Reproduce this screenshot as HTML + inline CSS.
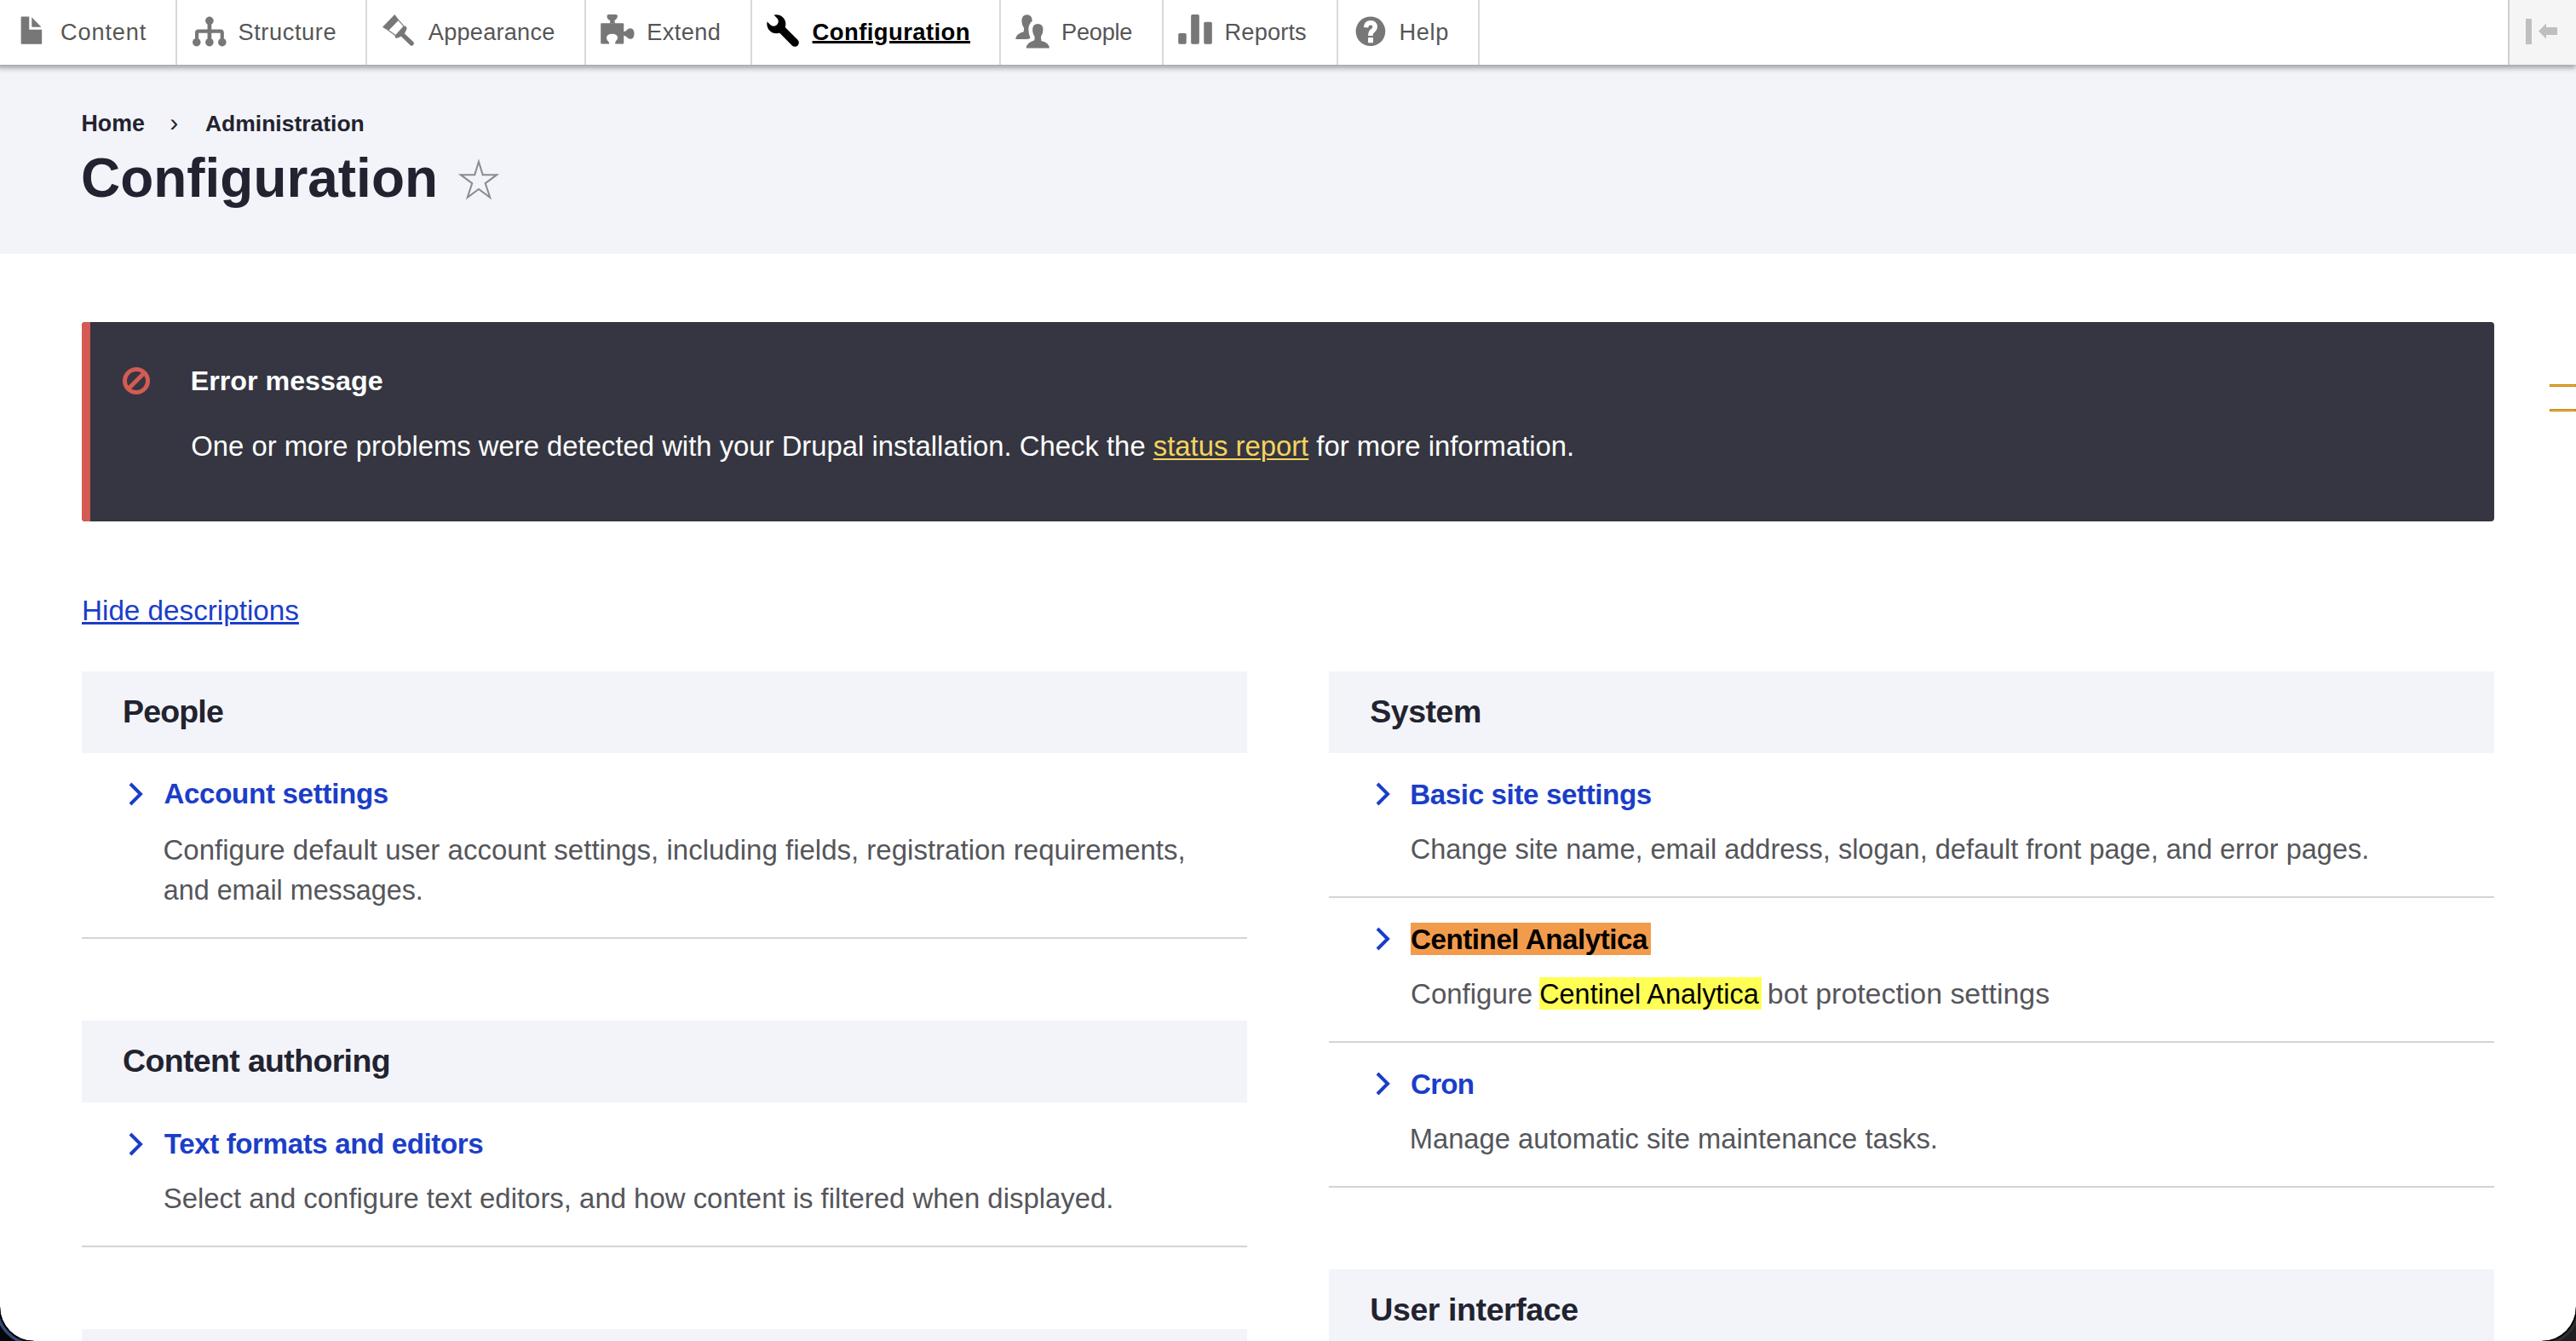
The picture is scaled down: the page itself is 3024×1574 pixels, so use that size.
<!DOCTYPE html>
<html><head><meta charset="utf-8">
<style>
html,body{margin:0;padding:0;}
body{width:3024px;height:1574px;overflow:hidden;position:relative;background:#fff;font-family:"Liberation Sans",sans-serif;}
.t{position:absolute;white-space:nowrap;line-height:1;}
.a{position:absolute;}
.r{position:absolute;}
</style></head><body>
<div class="r" style="left:0;top:0;width:3024px;height:298px;background:#f3f4f9"></div>
<!-- toolbar -->
<div class="r" style="left:0;top:0;width:3024px;height:76px;background:#fff;box-shadow:-2px 2px 6px 2px rgba(0,0,0,0.3333)"></div>
<div class="r" style="left:2946px;top:0;width:78px;height:76px;background:#f5f5f5"></div>
<div class="r" style="left:206px;top:0;width:2px;height:76px;background:#d9d9d9"></div>
<div class="r" style="left:429px;top:0;width:2px;height:76px;background:#d9d9d9"></div>
<div class="r" style="left:686px;top:0;width:2px;height:76px;background:#d9d9d9"></div>
<div class="r" style="left:881px;top:0;width:2px;height:76px;background:#d9d9d9"></div>
<div class="r" style="left:1173px;top:0;width:2px;height:76px;background:#d9d9d9"></div>
<div class="r" style="left:1364px;top:0;width:2px;height:76px;background:#d9d9d9"></div>
<div class="r" style="left:1569px;top:0;width:2px;height:76px;background:#d9d9d9"></div>
<div class="r" style="left:1735px;top:0;width:2px;height:76px;background:#d9d9d9"></div>
<div class="r" style="left:2944px;top:0;width:2px;height:76px;background:#d0d0d0"></div>
<!-- toggle icon -->
<div class="r" style="left:2965px;top:22px;width:7px;height:30px;background:#bfbfbf"></div>
<svg class="a" style="left:2979px;top:27px" width="24" height="20" viewBox="0 0 24 20"><path d="M1 9.5 L10 0.5 L10 5 L23 5 L23 14 L10 14 L10 18.5 Z" fill="#bfbfbf"/></svg>
<!-- star -->
<svg class="a" style="left:530px;top:180px" width="64" height="64" viewBox="0 0 1341 1341"><path d="M670 205 L768 527 L1115 527 L832 735 L948 1085 L670 880 L392 1085 L508 735 L225 527 L572 527 Z" fill="none" stroke="#878b96" stroke-width="42" stroke-linejoin="miter" stroke-miterlimit="10"/></svg>
<!-- error box -->
<div class="r" style="left:96px;top:378px;width:2832px;height:234px;background:#353641;border-radius:4px;overflow:hidden"><div style="position:absolute;left:0;top:0;width:10px;height:234px;background:#d45b53"></div></div>
<svg class="a" style="left:144px;top:431px" width="32" height="32" viewBox="0 0 32 32"><circle cx="16" cy="16" r="13.5" fill="none" stroke="#d45b53" stroke-width="5"/><path d="M7 25 L25 7" stroke="#d45b53" stroke-width="5"/></svg>
<!-- find tick marks -->
<div class="r" style="left:2993px;top:451px;width:31px;height:3px;background:#f0b429;border:1px solid #c4861b;box-sizing:border-box"></div>
<div class="r" style="left:2993px;top:480px;width:31px;height:3px;background:#f0b429;border:1px solid #c4861b;box-sizing:border-box"></div>
<!-- section bars -->
<div class="r" style="left:96px;top:788px;width:1368px;height:96px;background:#f3f4f9"></div>
<div class="r" style="left:1560px;top:788px;width:1368px;height:96px;background:#f3f4f9"></div>
<div class="r" style="left:96px;top:1198px;width:1368px;height:96px;background:#f3f4f9"></div>
<div class="r" style="left:96px;top:1560px;width:1368px;height:96px;background:#f3f4f9"></div>
<div class="r" style="left:1560px;top:1490px;width:1368px;height:96px;background:#f3f4f9"></div>
<!-- dividers -->
<div class="r" style="left:96px;top:1100px;width:1368px;height:2px;background:#d4d4d8"></div>
<div class="r" style="left:96px;top:1462px;width:1368px;height:2px;background:#d4d4d8"></div>
<div class="r" style="left:1560px;top:1052px;width:1368px;height:2px;background:#d4d4d8"></div>
<div class="r" style="left:1560px;top:1222px;width:1368px;height:2px;background:#d4d4d8"></div>
<div class="r" style="left:1560px;top:1392px;width:1368px;height:2px;background:#d4d4d8"></div>
<!-- highlights -->
<div class="r" style="left:1656px;top:1083px;width:282px;height:38px;background:#f39b4c"></div>
<div class="r" style="left:1807px;top:1147px;width:261px;height:38px;background:#ffff55"></div>
<svg class="a" style="left:150px;top:918px" width="20" height="28" viewBox="0 0 20 28"><path d="M3 2 L15 14 L3 26" fill="none" stroke="#1b3ec8" stroke-width="4"/></svg>
<svg class="a" style="left:150px;top:1329px" width="20" height="28" viewBox="0 0 20 28"><path d="M3 2 L15 14 L3 26" fill="none" stroke="#1b3ec8" stroke-width="4"/></svg>
<svg class="a" style="left:1614px;top:918px" width="20" height="28" viewBox="0 0 20 28"><path d="M3 2 L15 14 L3 26" fill="none" stroke="#1b3ec8" stroke-width="4"/></svg>
<svg class="a" style="left:1614px;top:1088px" width="20" height="28" viewBox="0 0 20 28"><path d="M3 2 L15 14 L3 26" fill="none" stroke="#1b3ec8" stroke-width="4"/></svg>
<svg class="a" style="left:1614px;top:1258px" width="20" height="28" viewBox="0 0 20 28"><path d="M3 2 L15 14 L3 26" fill="none" stroke="#1b3ec8" stroke-width="4"/></svg>
<svg class="a" style="left:16px;top:10px" width="40" height="50" viewBox="0 0 1073 1341"><g fill="#777"><path d="M232 262 Q232 252 245 252 L490 252 L490 665 L890 665 L890 1105 Q890 1118 877 1118 L245 1118 Q232 1118 232 1105 Z"/><path d="M570 272 L872 580 L590 580 Q570 580 570 560 Z"/></g></svg><svg class="a" style="left:220px;top:10px" width="50" height="50" viewBox="0 0 1341 1341"><g fill="#777"><circle cx="695" cy="385" r="130"/><rect x="632" y="385" width="126" height="680"/><path d="M297 1065 L297 770 Q297 715 352 715 L1040 715 Q1093 715 1093 770 L1093 1065" fill="none" stroke="#777" stroke-width="112"/><circle cx="290" cy="1065" r="128"/><circle cx="695" cy="1065" r="128"/><circle cx="1095" cy="1065" r="128"/></g></svg><svg class="a" style="left:444px;top:10px" width="50" height="50" viewBox="0 0 1341 1341"><g fill="#777"><path d="M135 580 L520 185 L640 350 L310 690 Z"/><path d="M318 682 L632 360 L808 560 L550 850 Z" fill="none" stroke="#777" stroke-width="30" stroke-linejoin="round"/><path d="M525 875 L835 545 Q905 570 900 640 L845 760 L720 870 Q600 960 540 925 Z"/><line x1="740" y1="800" x2="1055" y2="1100" stroke="#777" stroke-width="140" stroke-linecap="round"/></g></svg><svg class="a" style="left:700px;top:10px" width="50" height="50" viewBox="0 0 1341 1341"><g fill="#777"><rect x="140" y="460" width="725" height="655" rx="30"/><path d="M425 470 L440 385 Q340 330 335 245 Q340 190 385 190 L625 190 Q672 195 670 250 Q660 330 572 385 L595 470 Z"/><path d="M855 720 Q925 730 958 680 Q1005 625 1075 625 Q1192 640 1195 790 Q1190 955 1075 962 Q1005 958 958 900 Q920 855 855 850 Z"/></g><path d="M405 1125 Q425 1060 362 1020 Q312 960 322 900 Q352 800 495 795 Q648 800 675 900 Q682 970 612 1030 Q578 1070 600 1125 Z" fill="#fff"/></svg><svg class="a" style="left:894px;top:10px" width="50" height="50" viewBox="0 0 1341 1341"><g><line x1="600" y1="625" x2="1050" y2="1075" stroke="#000" stroke-width="250" stroke-linecap="round"/><circle cx="465" cy="490" r="295" fill="#000"/><line x1="380" y1="405" x2="40" y2="65" stroke="#fff" stroke-width="300" stroke-linecap="round"/></g></svg><svg class="a" style="left:1186px;top:10px" width="50" height="50" viewBox="0 0 1341 1341"><g fill="#777"><path d="M165 968 Q172 800 420 730 L432 612 Q356 520 360 372 Q372 195 520 195 Q690 200 692 390 L640 445 L585 540 L572 655 Q575 800 632 922 Q565 968 520 968 Z"/><path d="M500 1250 Q510 1080 760 1002 L768 882 Q700 800 700 650 Q712 480 865 480 Q1032 482 1032 660 Q1030 800 965 882 L975 1022 Q1225 1080 1230 1250 Z"/></g></svg><svg class="a" style="left:1378px;top:10px" width="50" height="50" viewBox="0 0 1341 1341"><g fill="#777"><rect x="140" y="780" width="255" height="337" rx="42"/><rect x="540" y="190" width="260" height="927" rx="42"/><rect x="945" y="425" width="257" height="692" rx="42"/></g></svg><svg class="a" style="left:1584px;top:10px" width="50" height="50" viewBox="0 0 1341 1341"><circle cx="668" cy="718" r="465" fill="#777"/><path d="M522 595 C535 470 600 448 675 448 C765 448 808 505 808 578 C808 650 745 690 712 720 C680 750 667 790 667 858" fill="none" stroke="#fff" stroke-width="150"/><rect x="590" y="910" width="160" height="168" rx="14" fill="#fff"/></svg>
<div class="t" id="tb1" style="left:71.1px;top:24.0px;font-size:27.18px;font-weight:400;color:#565656;letter-spacing:0.830px;">Content</div><div class="t" id="tb2" style="left:279.5px;top:24.0px;font-size:27.18px;font-weight:400;color:#565656;letter-spacing:0.596px;">Structure</div><div class="t" id="tb3" style="left:502.8px;top:24.0px;font-size:27.18px;font-weight:400;color:#565656;letter-spacing:0.220px;">Appearance</div><div class="t" id="tb4" style="left:759.3px;top:24.0px;font-size:27.18px;font-weight:400;color:#565656;letter-spacing:0.372px;">Extend</div><div class="t" id="tb5" style="left:953.6px;top:23.7px;font-size:27.47px;font-weight:700;color:#000;letter-spacing:0.411px;text-decoration:underline;text-underline-offset:1px;text-decoration-thickness:3px;">Configuration</div><div class="t" id="tb6" style="left:1246.0px;top:24.0px;font-size:27.18px;font-weight:400;color:#565656;letter-spacing:-0.239px;">People</div><div class="t" id="tb7" style="left:1437.6px;top:24.0px;font-size:27.18px;font-weight:400;color:#565656;letter-spacing:0.157px;">Reports</div><div class="t" id="tb8" style="left:1642.5px;top:24.0px;font-size:27.18px;font-weight:400;color:#565656;letter-spacing:0.690px;">Help</div><div class="t" id="bc1" style="left:95.5px;top:132.0px;font-size:26.78px;font-weight:700;color:#222330;">Home</div><div class="t" id="bc2" style="left:199.2px;top:129.3px;font-size:30.00px;font-weight:400;color:#222330;">›</div><div class="t" id="bc3" style="left:241.0px;top:132.3px;font-size:26.48px;font-weight:700;color:#222330;">Administration</div><div class="t" id="h1" style="left:95.1px;top:178.2px;font-size:63.91px;font-weight:700;color:#222330;">Configuration</div><div class="t" id="em1" style="left:223.7px;top:430.5px;font-size:32.26px;font-weight:700;color:#fff;">Error message</div><div class="t" id="em2" style="left:224.3px;top:508.1px;font-size:32.85px;font-weight:400;color:#fff;">One or more problems were detected with your Drupal installation. Check the <span style="color:#f4d35e;text-decoration:underline;text-underline-offset:3px;text-decoration-thickness:2px">status report</span> for more information.</div><div class="t" id="hd" style="left:96.0px;top:699.6px;font-size:33.24px;font-weight:400;color:#1b3ec8;text-decoration:underline;text-underline-offset:2px;text-decoration-thickness:2.5px;">Hide descriptions</div><div class="t" id="s1" style="left:144.0px;top:817.3px;font-size:37.50px;font-weight:700;color:#222330;letter-spacing:-0.833px;">People</div><div class="t" id="s2" style="left:1608.3px;top:817.3px;font-size:37.50px;font-weight:700;color:#222330;letter-spacing:-0.481px;">System</div><div class="t" id="s3" style="left:144.1px;top:1227.3px;font-size:37.50px;font-weight:700;color:#222330;letter-spacing:-0.656px;">Content authoring</div><div class="t" id="s4" style="left:1608.3px;top:1519.3px;font-size:37.50px;font-weight:700;color:#222330;letter-spacing:-0.407px;">User interface</div><div class="t" id="l1" style="left:192.4px;top:915.4px;font-size:33.14px;font-weight:700;color:#1b3ec8;letter-spacing:-0.322px;">Account settings</div><div class="t" id="d1a" style="left:191.5px;top:981.1px;font-size:33.02px;font-weight:400;color:#55565b;">Configure default user account settings, including fields, registration requirements,</div><div class="t" id="d1b" style="left:191.8px;top:1028.7px;font-size:32.29px;font-weight:400;color:#55565b;">and email messages.</div><div class="t" id="l2" style="left:192.8px;top:1326.3px;font-size:33.14px;font-weight:700;color:#1b3ec8;letter-spacing:-0.399px;">Text formats and editors</div><div class="t" id="d2" style="left:191.7px;top:1390.8px;font-size:32.92px;font-weight:400;color:#55565b;">Select and configure text editors, and how content is filtered when displayed.</div><div class="t" id="l3" style="left:1655.2px;top:915.7px;font-size:33.14px;font-weight:700;color:#1b3ec8;letter-spacing:-0.379px;">Basic site settings</div><div class="t" id="d3" style="left:1655.7px;top:981.1px;font-size:32.50px;font-weight:400;color:#55565b;">Change site name, email address, slogan, default front page, and error pages.</div><div class="t" id="l4" style="left:1656.0px;top:1085.9px;font-size:33.14px;font-weight:700;color:#000;letter-spacing:-0.443px;">Centinel Analytica</div><div class="t" id="d4a" style="left:1656.1px;top:1150.6px;font-size:32.97px;font-weight:400;color:#55565b;">Configure</div><div class="t" id="d4b" style="left:1807.2px;top:1151.1px;font-size:32.41px;font-weight:400;color:#000;">Centinel Analytica</div><div class="t" id="d4c" style="left:2074.8px;top:1149.8px;font-size:33.86px;font-weight:400;color:#55565b;">bot protection settings</div><div class="t" id="l5" style="left:1656.0px;top:1255.9px;font-size:33.14px;font-weight:700;color:#1b3ec8;letter-spacing:-0.767px;">Cron</div><div class="t" id="d5" style="left:1654.7px;top:1321.0px;font-size:32.72px;font-weight:400;color:#55565b;">Manage automatic site maintenance tasks.</div>
<!-- window corners -->
<svg class="a" style="left:0;top:1514px" width="60" height="60" viewBox="0 0 60 60"><path d="M0 20 L0 60 L40 60 A40 40 0 0 1 0 20 Z" fill="#05070d"/><path d="M40 63.5 A43.5 43.5 0 0 1 -3.5 20" stroke="#34497a" stroke-width="3.5" fill="none"/><path d="M40 60.6 A40.6 40.6 0 0 1 -0.6 20" stroke="#000" stroke-width="1.6" fill="none"/></svg>
<svg class="a" style="left:2964px;top:1514px" width="60" height="60" viewBox="0 0 60 60"><path d="M60 20 L60 60 L20 60 A40 40 0 0 0 60 20 Z" fill="#1e1f22"/><path d="M20 63.5 A43.5 43.5 0 0 0 63.5 20" stroke="#2e2f33" stroke-width="3" fill="none"/><path d="M20 60.6 A40.6 40.6 0 0 0 60.6 20" stroke="#000" stroke-width="1.6" fill="none"/></svg>
</body></html>
